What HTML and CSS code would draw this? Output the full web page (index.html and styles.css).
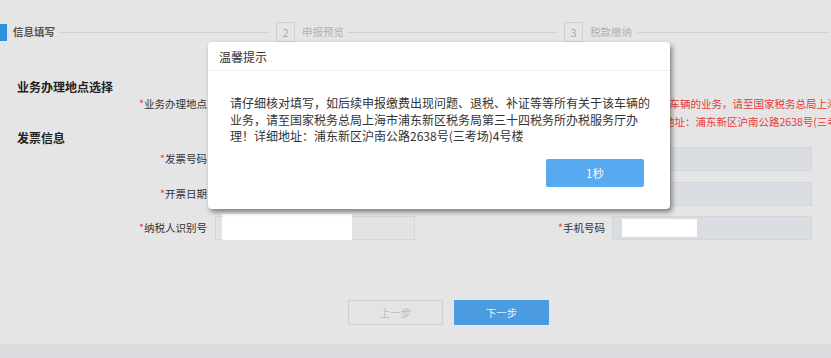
FILE: index.html
```html
<!DOCTYPE html>
<html lang="zh-CN">
<head>
  <meta charset="UTF-8">
  <title>车辆购置税申报 - 信息填写</title>
  <link rel="stylesheet" href="styles.css">
</head>
<body>

  <div class="page">

    <!-- Steps -->
    <div class="steps">
      <span class="step-bar"></span>
      <span class="step-label active">信息填写</span>
      <span class="step-line line-1"></span>
      <span class="step-num">2</span>
      <span class="step-label">申报预览</span>
      <span class="step-line line-2"></span>
      <span class="step-num">3</span>
      <span class="step-label">税款缴纳</span>
      <span class="step-line line-3"></span>
    </div>

    <!-- Place -->
    <h3 class="sec-title first">业务办理地点选择</h3>
    <div class="row-place">
      <label class="label"><i>*</i>业务办理地点</label>
      <div class="field select"></div>
      <div class="note">
        <p class="line-a">该车辆的业务，请至国家税务总局上海市浦东新区税务局第三十四税务所办理！</p>
        <p>详细地址：浦东新区沪南公路2638号(三考场)4号楼</p>
      </div>
    </div>

    <!-- Invoice -->
    <h3 class="sec-title">发票信息</h3>
    <div class="form-grid">
      <label class="label"><i>*</i>发票号码</label>
      <div class="field"></div>
      <label class="label right"><i>*</i>发票代码</label>
      <div class="field blue"></div>

      <label class="label"><i>*</i>开票日期</label>
      <div class="field"></div>
      <label class="label right"><i>*</i>价税合计</label>
      <div class="field blue"></div>

      <label class="label"><i>*</i>纳税人识别号</label>
      <div class="field"><span class="mask mask-id"></span></div>
      <label class="label right"><i>*</i>手机号码</label>
      <div class="field blue"><span class="mask mask-phone"></span></div>
    </div>

    <div class="actions">
      <button class="btn btn-prev" disabled>上一步</button>
      <button class="btn btn-next">下一步</button>
    </div>

    <div class="footer"></div>
  </div>

  <!-- Tip dialog -->
  <div class="modal">
    <div class="modal-head">温馨提示</div>
    <div class="modal-body">
      <p>请仔细核对填写，如后续申报缴费出现问题、退税、补证等等所有关于该车辆的业务，请至国家税务总局上海市浦东新区税务局第三十四税务所办税服务厅办理！详细地址：浦东新区沪南公路2638号(三考场)4号楼</p>
      <div class="modal-foot">
        <button class="btn-ok">1秒</button>
      </div>
    </div>
  </div>

</body>
</html>
```

FILE: styles.css
```css
:root {
  --bg: #e5e5e5;
  --text: #333;
  --muted: #aaa;
  --line: #d2d2d2;
  --red: #e43a3a;
  --blue: #4a9be0;
  --font: "Noto Sans CJK SC", "Noto Sans", sans-serif;
}

html, body {
  margin: 0;
  height: 100%;
}

body {
  font-family: var(--font);
  background: var(--bg);
  color: var(--text);
  overflow: hidden;
}

.page {
  width: 831px;
  overflow: hidden;
}

/* steps */
.steps {
  display: flex;
  align-items: center;
  height: 20px;
  margin-top: 22px;
}

.step-bar {
  width: 7px;
  height: 17px;
  background: #2d93dc;
}

.step-label {
  font-size: 10.5px;
  line-height: 20px;
  color: #b0b0b0;
  margin-left: 6px;
  white-space: nowrap;
}

.step-label.active {
  color: #555;
  font-weight: bold;
}

.step-line {
  height: 1px;
  background: var(--line);
}

.line-1 { width: 212px; margin: 0 6px 0 3px; }
.line-2 { width: 210px; margin: 0 6px 0 4px; }
.line-3 { flex: 1; margin: 0 2px 0 5px; }

.step-num {
  box-sizing: border-box;
  width: 19px;
  height: 20px;
  border: 1px solid #cfcfcf;
  font-size: 11px;
  line-height: 18px;
  text-align: center;
  color: var(--muted);
}

.step-num + .step-label {
  margin-left: 7px;
}

/* sections */
.sec-title {
  margin: 1px 0 0 17px;
  font-size: 12px;
  line-height: 16px;
  font-weight: bold;
  color: #222;
}

.sec-title.first {
  margin-top: 37px;
}

.label {
  box-sizing: border-box;
  font-size: 10.5px;
  color: #333;
  text-align: right;
  white-space: nowrap;
}

.label i {
  font-style: normal;
  color: var(--red);
}

.row-place {
  display: flex;
  height: 34px;
}

.row-place .label {
  flex-shrink: 0;
  width: 215px;
  padding-right: 8px;
  line-height: 18px;
}

.row-place .select {
  flex-shrink: 0;
  height: 24px;
}

.note {
  flex-shrink: 0;
  margin-left: 228px;
  font-size: 10.5px;
  line-height: 18px;
  color: var(--red);
  white-space: nowrap;
}

.note p {
  margin: 0;
}

.note .line-a {
  text-indent: 16px;
}

/* invoice grid */
.form-grid {
  display: grid;
  grid-template-columns: 215px 200px 197px 200px;
  grid-auto-rows: 24px;
  row-gap: 10.5px;
  margin-top: 1px;
}

.form-grid .label {
  padding-right: 8px;
  line-height: 24px;
}

.form-grid .label.right {
  padding-right: 7px;
}

.field {
  box-sizing: border-box;
  width: 200px;
  height: 24px;
  border: 1px solid #d5d5d5;
  background: #e3e3e3;
  position: relative;
}

.field.blue {
  background: #dadde2;
  border-color: #d3d6da;
}

.mask {
  position: absolute;
  background: #fff;
}

.mask-id {
  left: 6px;
  top: -3px;
  width: 130px;
  height: 26px;
}

.mask-phone {
  left: 9px;
  top: 2px;
  width: 75px;
  height: 18px;
}

/* buttons */
.actions {
  display: flex;
  gap: 11px;
  padding-left: 348px;
  margin-top: 60px;
}

.btn {
  box-sizing: border-box;
  width: 95px;
  height: 25px;
  font-family: var(--font);
  font-size: 10.5px;
  border-radius: 1px;
  cursor: pointer;
}

.btn-prev {
  background: #e4e4e4;
  border: 1px solid #cfcfcf;
  color: #bbb;
}

.btn-next {
  background: var(--blue);
  border: none;
  color: #e6f1fb;
}

.footer {
  height: 14px;
  margin-top: 19px;
  background: #dcdde1;
}

/* modal */
.modal {
  position: absolute;
  left: 208px;
  top: 42px;
  width: 462px;
  height: 167px;
  background: #fff;
  border-radius: 4px;
  box-shadow: 2px 3px 5px rgba(0, 0, 0, 0.45);
}

.modal-head {
  height: 28px;
  padding-left: 11px;
  font-size: 12px;
  line-height: 30px;
  color: #333;
  border-bottom: 1px solid #eee;
}

.modal-body {
  padding: 24px 18px 0 22px;
}

.modal-body p {
  margin: 0;
  font-size: 12px;
  line-height: 16.7px;
  color: #333;
}

.modal-foot {
  display: flex;
  justify-content: flex-end;
  margin-top: 14px;
}

.btn-ok {
  width: 98px;
  height: 28px;
  margin-right: 8px;
  border: none;
  border-radius: 2px;
  background: #57aaef;
  color: #fff;
  font-family: var(--font);
  font-size: 11.5px;
}
```
